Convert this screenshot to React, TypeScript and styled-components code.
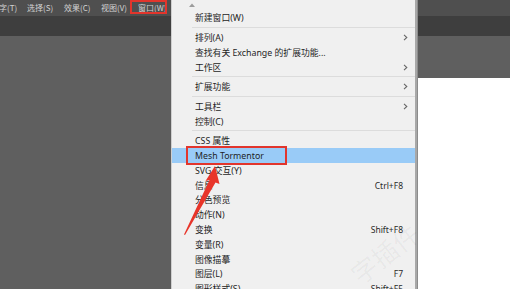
import React from "react";
import styled, { createGlobalStyle } from "styled-components";

const GlobalStyle = createGlobalStyle`
  html, body { margin: 0; padding: 0; background: #606060; }
  body { font-family: "Noto Sans", "Noto Sans CJK SC", sans-serif; }
`;

const Screen = styled.div`
  position: relative;
  width: 510px;
  height: 289px;
  overflow: hidden;
  display: flex;
  flex-direction: column;
  background: #606060;
`;

const MenuBar = styled.div`
  height: 16px;
  background: #4f4f4f;
  display: flex;
  align-items: center;
  gap: 10px;
  margin-left: -1px;
`;

const MenuBarItem = styled.span`
  font-family: "Noto Sans CJK SC", sans-serif;
  font-size: 8px;
  line-height: 12px;
  width: 27px;
  color: #d2d2d2;
  white-space: nowrap;
  &:first-child { width: 18px; }
`;

const ControlBar = styled.div`
  height: 20px;
  background: #3e3e3e;
`;

const Workspace = styled.div`
  flex: 1;
  display: flex;
  padding: 42px 0 0 300px;
  background: #5f5f5f;
`;

const DocumentPage = styled.div`
  flex: 1;
  background: #ffffff;
`;

const Dropdown = styled.div`
  position: absolute;
  left: 171px;
  top: 0;
  width: 243px;
  height: 300px;
  background: #f0f0f0;
  border-left: 1px solid #cfcfcf;
  border-right: 2px solid #a8a8a8;
  box-shadow: 1px 0 0 #8c8c8c;
  display: flex;
  flex-direction: column;
  font-family: "Noto Sans", "Noto Sans CJK SC", sans-serif;
`;

const ScrollUp = styled.div`
  height: 10.6px;
  flex: none;
  display: flex;
  align-items: flex-start;
  padding: 3px 0 0 17px;
  box-sizing: border-box;
`;

const Item = styled.div<{ $active?: boolean }>`
  height: 14.8px;
  flex: none;
  display: flex;
  align-items: center;
  padding: 0 7px 0 23px;
  background: ${(p) => (p.$active ? "#99cbf7" : "transparent")};
  font-size: 8.8px;
  color: #1e1e1e;
  white-space: nowrap;
`;

const Label = styled.span`
  flex: 1;
`;

const Shortcut = styled.span`
  font-size: 8.5px;
  color: #2a2a2a;
  padding-right: 5px;
`;

const Separator = styled.div`
  height: 4.8px;
  flex: none;
  display: flex;
  align-items: center;
  padding-left: 20px;

  &::after {
    content: "";
    flex: 1;
    height: 1px;
    background: #dcdcdc;
  }
`;

const MarkBox = styled.div<{ $l: number; $t: number; $w: number; $h: number }>`
  position: absolute;
  left: ${(p) => p.$l}px;
  top: ${(p) => p.$t}px;
  width: ${(p) => p.$w}px;
  height: ${(p) => p.$h}px;
  border: 2px solid #e2352c;
  box-sizing: border-box;
  pointer-events: none;
`;

const ArrowSvg = styled.svg`
  position: absolute;
  left: 180px;
  top: 160px;
  pointer-events: none;
`;

const Watermark = styled.div`
  position: absolute;
  left: 342px;
  top: 262px;
  font-family: "Noto Sans CJK SC", sans-serif;
  font-size: 26px;
  color: rgba(0, 0, 0, 0.045);
  transform: rotate(-38deg);
  transform-origin: left top;
  white-space: nowrap;
  pointer-events: none;
`;

const Chevron = () => (
  <svg width="5" height="7" viewBox="0 0 5 7">
    <path d="M1 0.8 L3.8 3.5 L1 6.2" fill="none" stroke="#666" strokeWidth="1.1" />
  </svg>
);

type Entry =
  | { sep: true }
  | { label: string; shortcut?: string; sub?: boolean; active?: boolean };

const entries: Entry[] = [
  { label: "新建窗口(W)" },
  { sep: true },
  { label: "排列(A)", sub: true },
  { label: "查找有关 Exchange 的扩展功能..." },
  { label: "工作区", sub: true },
  { sep: true },
  { label: "扩展功能", sub: true },
  { sep: true },
  { label: "工具栏", sub: true },
  { label: "控制(C)" },
  { sep: true },
  { label: "CSS 属性" },
  { label: "Mesh Tormentor", active: true },
  { label: "SVG 交互(Y)" },
  { label: "信息", shortcut: "Ctrl+F8" },
  { label: "分色预览" },
  { label: "动作(N)" },
  { label: "变换", shortcut: "Shift+F8" },
  { label: "变量(R)" },
  { label: "图像描摹" },
  { label: "图层(L)", shortcut: "F7" },
  { label: "图形样式(S)", shortcut: "Shift+F5" },
];

const topMenus = ["字(T)", "选择(S)", "效果(C)", "视图(V)", "窗口(W)"];

export default function App() {
  return (
    <>
      <GlobalStyle />
      <Screen>
        <MenuBar>
          {topMenus.map((m) => (
            <MenuBarItem key={m}>{m}</MenuBarItem>
          ))}
        </MenuBar>
        <ControlBar />
        <Workspace>
          <DocumentPage />
        </Workspace>

        <Dropdown>
          <ScrollUp>
            <svg width="6" height="4" viewBox="0 0 6 4">
              <path d="M0 4 L3 0.5 L6 4 Z" fill="#9c9c9c" />
            </svg>
          </ScrollUp>
          {entries.map((e, i) =>
            "sep" in e ? (
              <Separator key={i} />
            ) : (
              <Item key={i} $active={e.active}>
                <Label>{e.label}</Label>
                {e.shortcut && <Shortcut>{e.shortcut}</Shortcut>}
                {e.sub && <Chevron />}
              </Item>
            )
          )}
        </Dropdown>

        <Watermark>字插件</Watermark>

        <MarkBox $l={130} $t={0} $w={37} $h={14} />
        <MarkBox $l={186} $t={146} $w={101} $h={19} />

        <ArrowSvg width="45" height="80" viewBox="0 0 45 80">
          <path
            d="M35 6 L39.5 24 L35.5 22.5 L5 75 L4 74.5 L29.5 20 L25.5 21 Z"
            fill="#e8352a"
          />
        </ArrowSvg>
      </Screen>
    </>
  );
}
